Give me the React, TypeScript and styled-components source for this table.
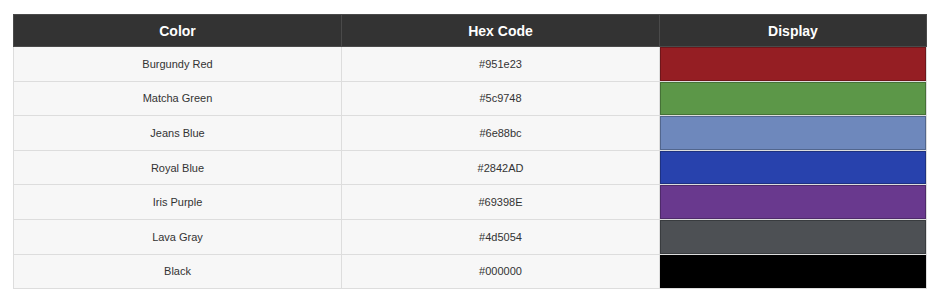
import React from 'react';
import styled, { createGlobalStyle } from 'styled-components';

const GlobalStyle = createGlobalStyle`
  body {
    margin: 0;
    background: #ffffff;
    font-family: "Liberation Sans", Arial, sans-serif;
  }
`;

const Wrapper = styled.div`
  padding: 14px 14px 0 13px;
`;

const Table = styled.table`
  width: 913px;
  border-collapse: collapse;
  table-layout: fixed;
`;

const HeadCell = styled.th`
  height: 31px;
  padding: 0;
  background: #333333;
  color: #ffffff;
  font-size: 14px;
  font-weight: 700;
  text-align: center;
  border: 1px solid #4a4a4a;
`;

const Cell = styled.td`
  height: 33.6px;
  padding: 0;
  background: #f7f7f7;
  color: #333333;
  font-size: 11px;
  text-align: center;
  border: 1px solid #dddddd;
`;

const Swatch = styled.td<{ $color: string }>`
  padding: 0;
  background: ${({ $color }) => $color};
  border: 1px solid #dddddd;
  box-shadow: inset 0 0 0 1px rgba(0, 0, 0, 0.25);
`;

const colors = [
  { name: 'Burgundy Red', hex: '#951e23' },
  { name: 'Matcha Green', hex: '#5c9748' },
  { name: 'Jeans Blue', hex: '#6e88bc' },
  { name: 'Royal Blue', hex: '#2842AD' },
  { name: 'Iris Purple', hex: '#69398E' },
  { name: 'Lava Gray', hex: '#4d5054' },
  { name: 'Black', hex: '#000000' },
];

export default function App() {
  return (
    <>
      <GlobalStyle />
      <Wrapper>
        <Table>
          <colgroup>
            <col style={{ width: 328 }} />
            <col style={{ width: 318 }} />
            <col style={{ width: 267 }} />
          </colgroup>
          <thead>
            <tr>
              <HeadCell>Color</HeadCell>
              <HeadCell>Hex Code</HeadCell>
              <HeadCell>Display</HeadCell>
            </tr>
          </thead>
          <tbody>
            {colors.map((c) => (
              <tr key={c.name}>
                <Cell>{c.name}</Cell>
                <Cell>{c.hex}</Cell>
                <Swatch $color={c.hex} />
              </tr>
            ))}
          </tbody>
        </Table>
      </Wrapper>
    </>
  );
}
